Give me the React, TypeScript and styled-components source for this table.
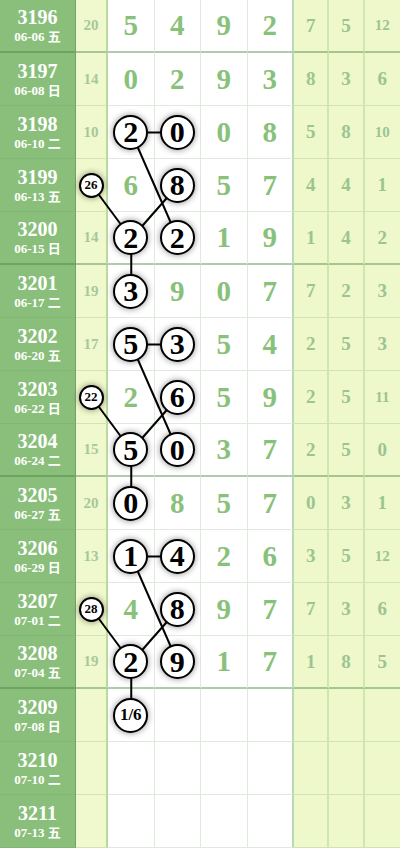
import styled, { createGlobalStyle } from "styled-components";

const GlobalStyle = createGlobalStyle`
  html, body {
    margin: 0;
    padding: 0;
    background: #ffffff;
    font-family: "Liberation Serif", "Noto Sans CJK SC", serif;
  }
`;

interface IRow {
  period: string;
  date: string;
  sum?: string;
  sumCircle?: string;
  digits?: number[];
  right?: number[];
  circled?: number[];
  extra?: string;
}

const rows: IRow[] = [
  { period: "3196", date: "06-06 五", sum: "20", digits: [5, 4, 9, 2], right: [7, 5, 12] },
  { period: "3197", date: "06-08 日", sum: "14", digits: [0, 2, 9, 3], right: [8, 3, 6] },
  { period: "3198", date: "06-10 二", sum: "10", digits: [2, 0, 0, 8], right: [5, 8, 10], circled: [0, 1] },
  { period: "3199", date: "06-13 五", sumCircle: "26", digits: [6, 8, 5, 7], right: [4, 4, 1], circled: [1] },
  { period: "3200", date: "06-15 日", sum: "14", digits: [2, 2, 1, 9], right: [1, 4, 2], circled: [0, 1] },
  { period: "3201", date: "06-17 二", sum: "19", digits: [3, 9, 0, 7], right: [7, 2, 3], circled: [0] },
  { period: "3202", date: "06-20 五", sum: "17", digits: [5, 3, 5, 4], right: [2, 5, 3], circled: [0, 1] },
  { period: "3203", date: "06-22 日", sumCircle: "22", digits: [2, 6, 5, 9], right: [2, 5, 11], circled: [1] },
  { period: "3204", date: "06-24 二", sum: "15", digits: [5, 0, 3, 7], right: [2, 5, 0], circled: [0, 1] },
  { period: "3205", date: "06-27 五", sum: "20", digits: [0, 8, 5, 7], right: [0, 3, 1], circled: [0] },
  { period: "3206", date: "06-29 日", sum: "13", digits: [1, 4, 2, 6], right: [3, 5, 12], circled: [0, 1] },
  { period: "3207", date: "07-01 二", sumCircle: "28", digits: [4, 8, 9, 7], right: [7, 3, 6], circled: [1] },
  { period: "3208", date: "07-04 五", sum: "19", digits: [2, 9, 1, 7], right: [1, 8, 5], circled: [0, 1] },
  { period: "3209", date: "07-08 日", extra: "1/6" },
  { period: "3210", date: "07-10 二" },
  { period: "3211", date: "07-13 五" },
];

const ROW_H = 53;
const SUM_X = 92;
const D0_X = 131.25;
const D1_X = 177.75;
const cy = (i: number) => i * ROW_H + ROW_H / 2;

// connecting strokes between the circled numbers, repeated every 4 rows
const segments: [number, number, number, number][] = [];
[2, 6, 10].forEach((s) => {
  segments.push([D0_X, cy(s), D1_X, cy(s)]);
  segments.push([D0_X, cy(s), D1_X, cy(s + 2)]);
  segments.push([SUM_X, cy(s + 1), D0_X, cy(s + 2)]);
  segments.push([D1_X, cy(s + 1), D0_X, cy(s + 2)]);
  segments.push([D0_X, cy(s + 2), D0_X, cy(s + 3)]);
});

const Board = styled.div`
  position: relative;
  width: 400px;
  overflow: hidden;
`;

const Row = styled.div`
  display: grid;
  grid-template-columns: 76px 32px repeat(4, 46.5px) repeat(3, 1fr);
  height: ${ROW_H}px;
`;

const Cell = styled.div<{ $thick: boolean }>`
  box-sizing: border-box;
  display: flex;
  align-items: center;
  justify-content: center;
  border-bottom: ${(p) => (p.$thick ? "2px solid rgba(70, 130, 60, 0.42)" : "1px solid rgba(90, 150, 80, 0.2)")};
`;

const Label = styled(Cell)`
  flex-direction: column;
  background: #8abf7b;
  color: #ffffff;
  font-weight: bold;
  border-right: 1px solid rgba(60, 120, 50, 0.35);
`;

const Period = styled.div`
  font-size: 20px;
  line-height: 21px;
`;

const DateText = styled.div`
  font-size: 13px;
  line-height: 15px;
  margin-top: 1px;
`;

const SumCell = styled(Cell)`
  background: #f0f8cd;
  color: #a6c89c;
  font-size: 15px;
  font-weight: bold;
  border-right: 2px solid rgba(90, 160, 70, 0.35);
`;

const DigitCell = styled(Cell)`
  color: #88c17a;
  font-size: 29px;
  font-weight: bold;
  border-right: 1px solid rgba(90, 150, 80, 0.2);
  &:nth-child(6) {
    border-right: 2px solid rgba(90, 160, 70, 0.4);
  }
`;

const RightCell = styled(Cell)<{ $small: boolean }>`
  background: #eef8cb;
  color: #9cc490;
  font-size: ${(p) => (p.$small ? "15px" : "19px")};
  font-weight: bold;
  border-right: 2px solid rgba(110, 170, 80, 0.22);
  &:last-child {
    border-right: none;
  }
`;

const Ball = styled.div<{ $size: number; $font: number }>`
  position: relative;
  z-index: 2;
  box-sizing: border-box;
  width: ${(p) => p.$size}px;
  height: ${(p) => p.$size}px;
  border-radius: 50%;
  border: 2px solid #000000;
  background: #ffffff;
  color: #000000;
  font-size: ${(p) => p.$font}px;
  font-weight: bold;
  display: flex;
  align-items: center;
  justify-content: center;
  box-shadow: 0 0 6px rgba(0, 0, 0, 0.45);
`;

const Lines = styled.svg`
  position: absolute;
  top: 0;
  left: 0;
  z-index: 1;
  pointer-events: none;
`;

export default function App() {
  return (
    <>
      <GlobalStyle />
      <Board>
        {rows.map((r, i) => {
          const thick = i % 4 === 0;
          return (
            <Row key={r.period}>
              <Label $thick={thick}>
                <Period>{r.period}</Period>
                <DateText>{r.date}</DateText>
              </Label>
              <SumCell $thick={thick}>
                {r.sumCircle ? (
                  <Ball $size={25} $font={13}>
                    {r.sumCircle}
                  </Ball>
                ) : (
                  r.sum
                )}
              </SumCell>
              {[0, 1, 2, 3].map((c) => {
                const d = r.digits ? r.digits[c] : undefined;
                const isCircled = r.circled?.includes(c);
                return (
                  <DigitCell key={c} $thick={thick}>
                    {r.extra && c === 0 ? (
                      <Ball $size={35} $font={17}>
                        {r.extra}
                      </Ball>
                    ) : isCircled ? (
                      <Ball $size={35} $font={30}>
                        {d}
                      </Ball>
                    ) : (
                      d
                    )}
                  </DigitCell>
                );
              })}
              {[0, 1, 2].map((c) => {
                const v = r.right ? r.right[c] : undefined;
                return (
                  <RightCell key={c} $thick={thick} $small={v !== undefined && v >= 10}>
                    {v}
                  </RightCell>
                );
              })}
            </Row>
          );
        })}
        <Lines width={400} height={rows.length * ROW_H}>
          {segments.map(([x1, y1, x2, y2], k) => (
            <line key={k} x1={x1} y1={y1} x2={x2} y2={y2} stroke="#000" strokeWidth={2} />
          ))}
        </Lines>
      </Board>
    </>
  );
}
